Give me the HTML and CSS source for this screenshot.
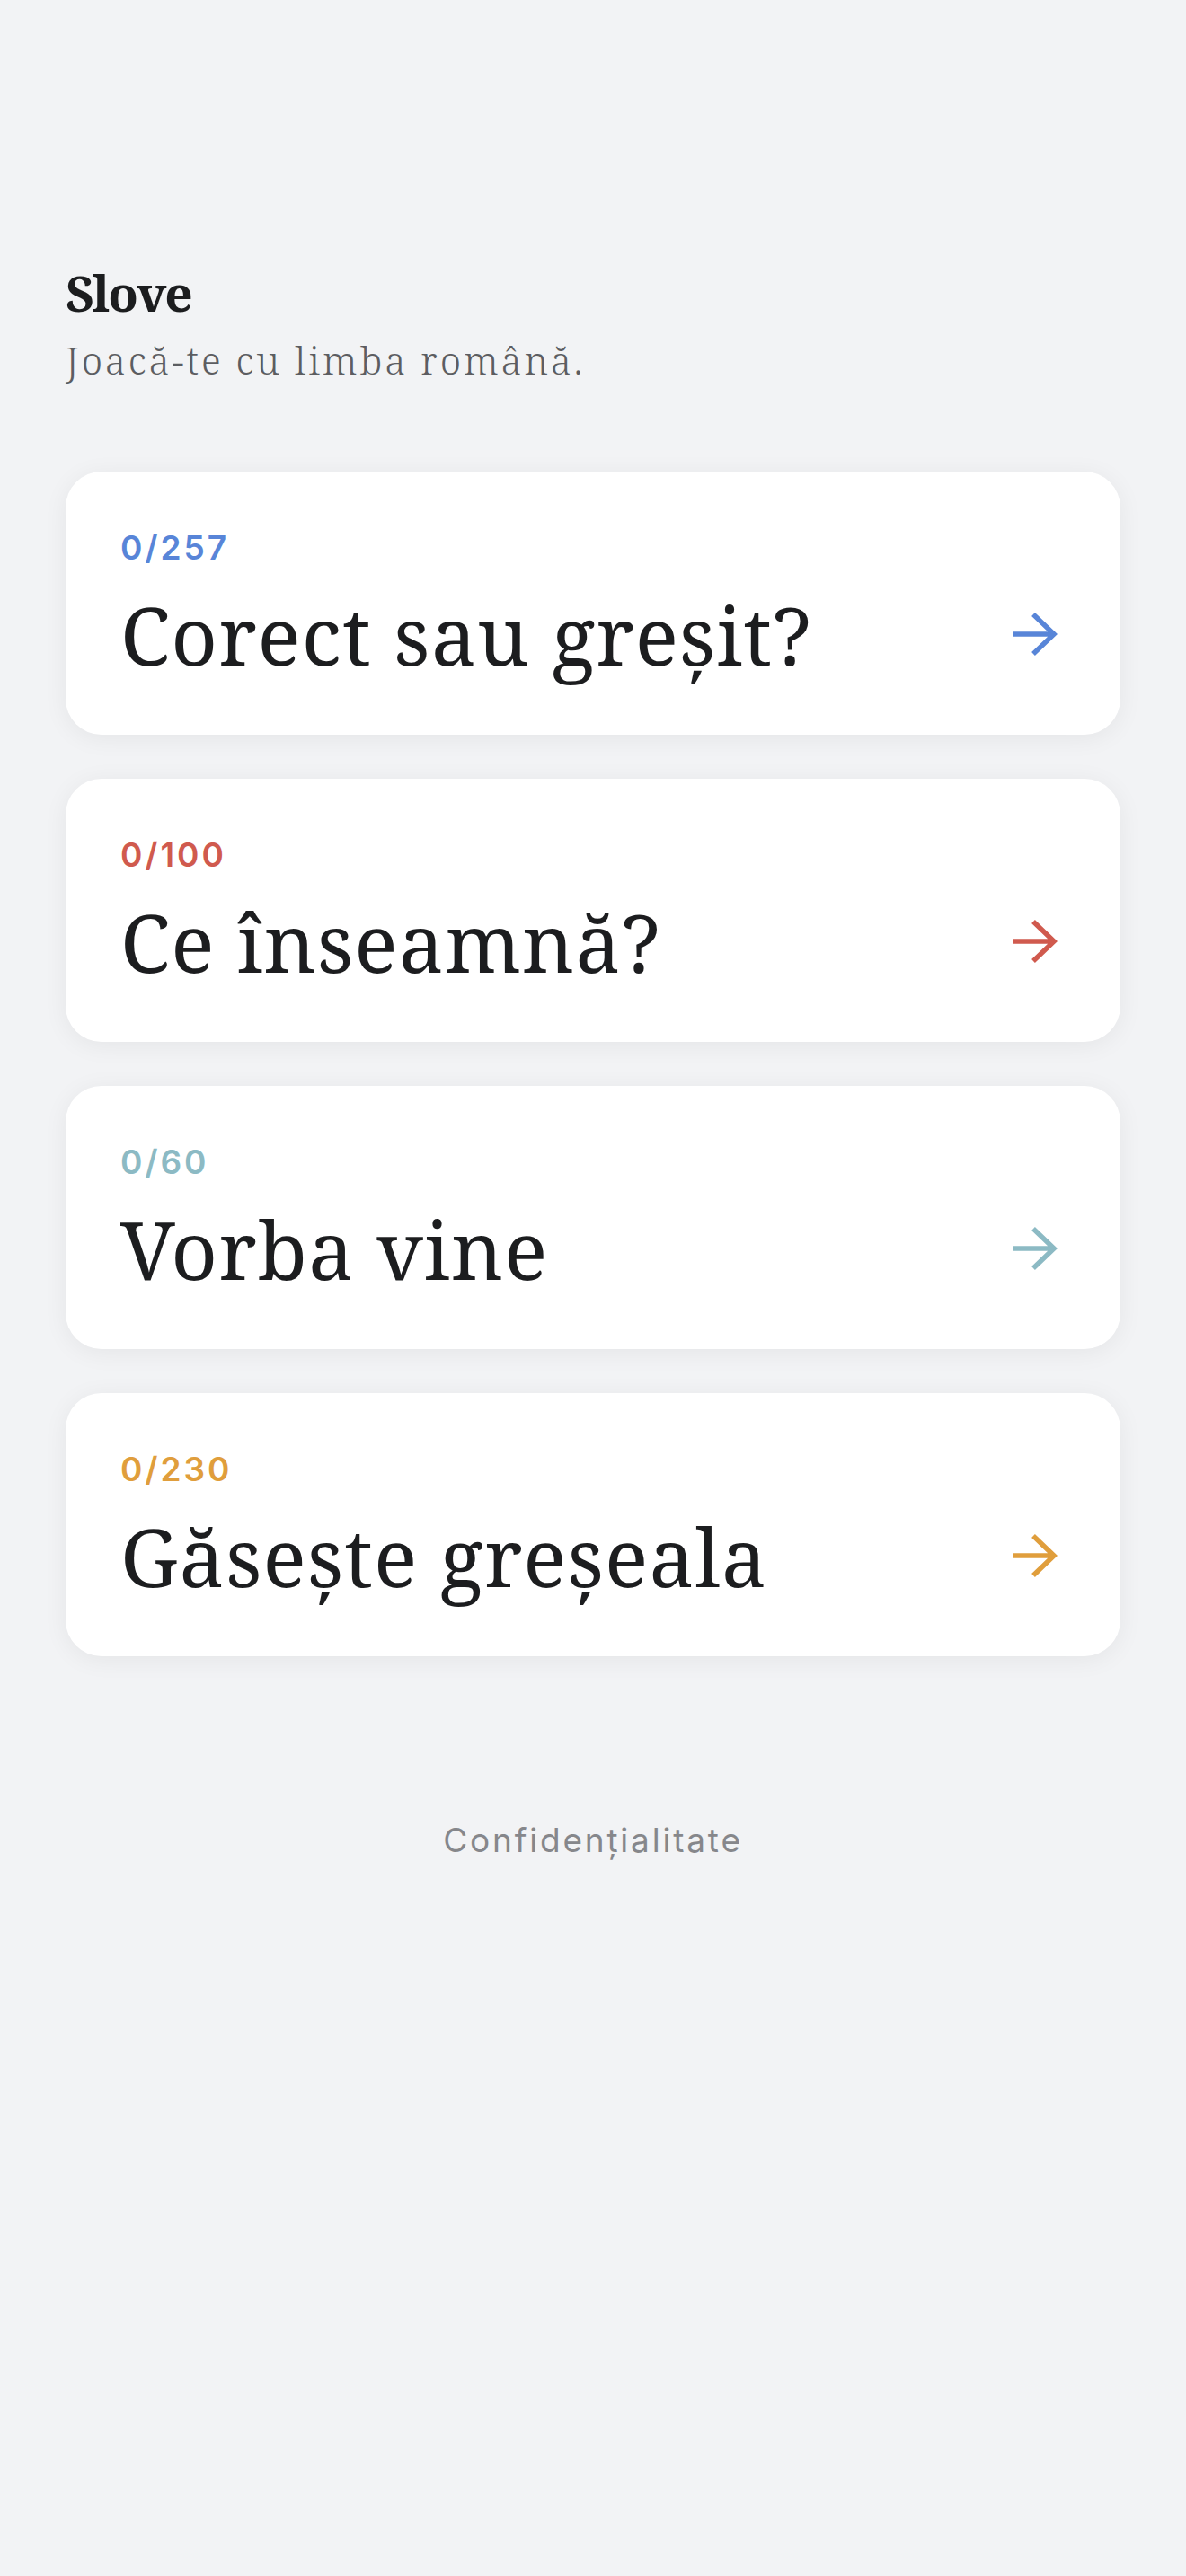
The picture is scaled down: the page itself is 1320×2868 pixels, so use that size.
FILE: index.html
```html
<!DOCTYPE html>
<html lang="ro">
  <head>
    <meta charset="UTF-8" />
    <meta name="viewport" content="width=device-width, initial-scale=1.0" />
    <title>Slove</title>
    <link rel="stylesheet" href="styles.css">
  </head>
  <body>
    <main class="page">
      <header class="header">
        <h1 class="brand">Slove</h1>
        <p class="tagline">Joacă-te cu limba română.</p>
      </header>

      <nav class="games">
        <a class="game blue" href="#">
          <span class="count">0/257</span>
          <span class="row">
            <span class="name">Corect sau greșit?</span>
            <svg class="arrow" viewBox="0 0 50 50" width="50" height="50"><path d="M0 25H47M23 3L46 25L23 47" /></svg>
          </span>
        </a>
        <a class="game red" href="#">
          <span class="count">0/100</span>
          <span class="row">
            <span class="name">Ce înseamnă?</span>
            <svg class="arrow" viewBox="0 0 50 50" width="50" height="50"><path d="M0 25H47M23 3L46 25L23 47" /></svg>
          </span>
        </a>
        <a class="game teal" href="#">
          <span class="count">0/60</span>
          <span class="row">
            <span class="name">Vorba vine</span>
            <svg class="arrow" viewBox="0 0 50 50" width="50" height="50"><path d="M0 25H47M23 3L46 25L23 47" /></svg>
          </span>
        </a>
        <a class="game orange" href="#">
          <span class="count">0/230</span>
          <span class="row">
            <span class="name">Găsește greșeala</span>
            <svg class="arrow" viewBox="0 0 50 50" width="50" height="50"><path d="M0 25H47M23 3L46 25L23 47" /></svg>
          </span>
        </a>
      </nav>

      <footer class="footer">
        <a href="#">Confidențialitate</a>
      </footer>
    </main>
  </body>
</html>
```

FILE: styles.css
```css
body {
  margin: 0;
  background-color: #f2f3f5;
  font-family: "Noto Serif", "DejaVu Serif", serif;
  color: #1c1d1f;
}
.page {
  padding: 293px 73px 200px;
}
.brand {
  margin: 0;
  font-size: 55px;
  font-weight: 700;
  line-height: 66px;
  letter-spacing: -2px;
}
.tagline {
  margin: 14px 0 0;
  font-size: 42px;
  font-weight: 300;
  line-height: 55px;
  letter-spacing: 3px;
  color: #5c5d61;
}
.games {
  display: flex;
  flex-direction: column;
  gap: 49px;
  margin-top: 97px;
}
.game {
  display: flex;
  flex-direction: column;
  height: 293px;
  box-sizing: border-box;
  padding: 63px 70px 0 61px;
  background: #fff;
  border-radius: 40px;
  box-shadow: 0 4px 28px rgba(0, 0, 0, 0.06);
  text-decoration: none;
  color: inherit;
}
.count {
  font-family: Inter, "Noto Sans", sans-serif;
  font-size: 37px;
  font-weight: 600;
  line-height: 43px;
  letter-spacing: 3px;
}
.row {
  display: flex;
  align-items: center;
  justify-content: space-between;
  margin-top: 21px;
}
.name {
  font-size: 90px;
  line-height: 108px;
  letter-spacing: 1px;
  white-space: nowrap;
}
.arrow {
  flex: none;
  fill: none;
  stroke: currentColor;
  stroke-width: 5.5;
}
.blue .count, .blue .arrow { color: #5885d8; }
.red .count, .red .arrow { color: #d05a4e; }
.teal .count, .teal .arrow { color: #8cbac4; }
.orange .count, .orange .arrow { color: #e09e3c; }
.footer {
  margin-top: 183px;
  text-align: center;
}
.footer a {
  font-family: Inter, "Noto Sans", sans-serif;
  font-size: 37px;
  line-height: 44px;
  letter-spacing: 2.8px;
  color: #86878b;
  text-decoration: none;
}
```
